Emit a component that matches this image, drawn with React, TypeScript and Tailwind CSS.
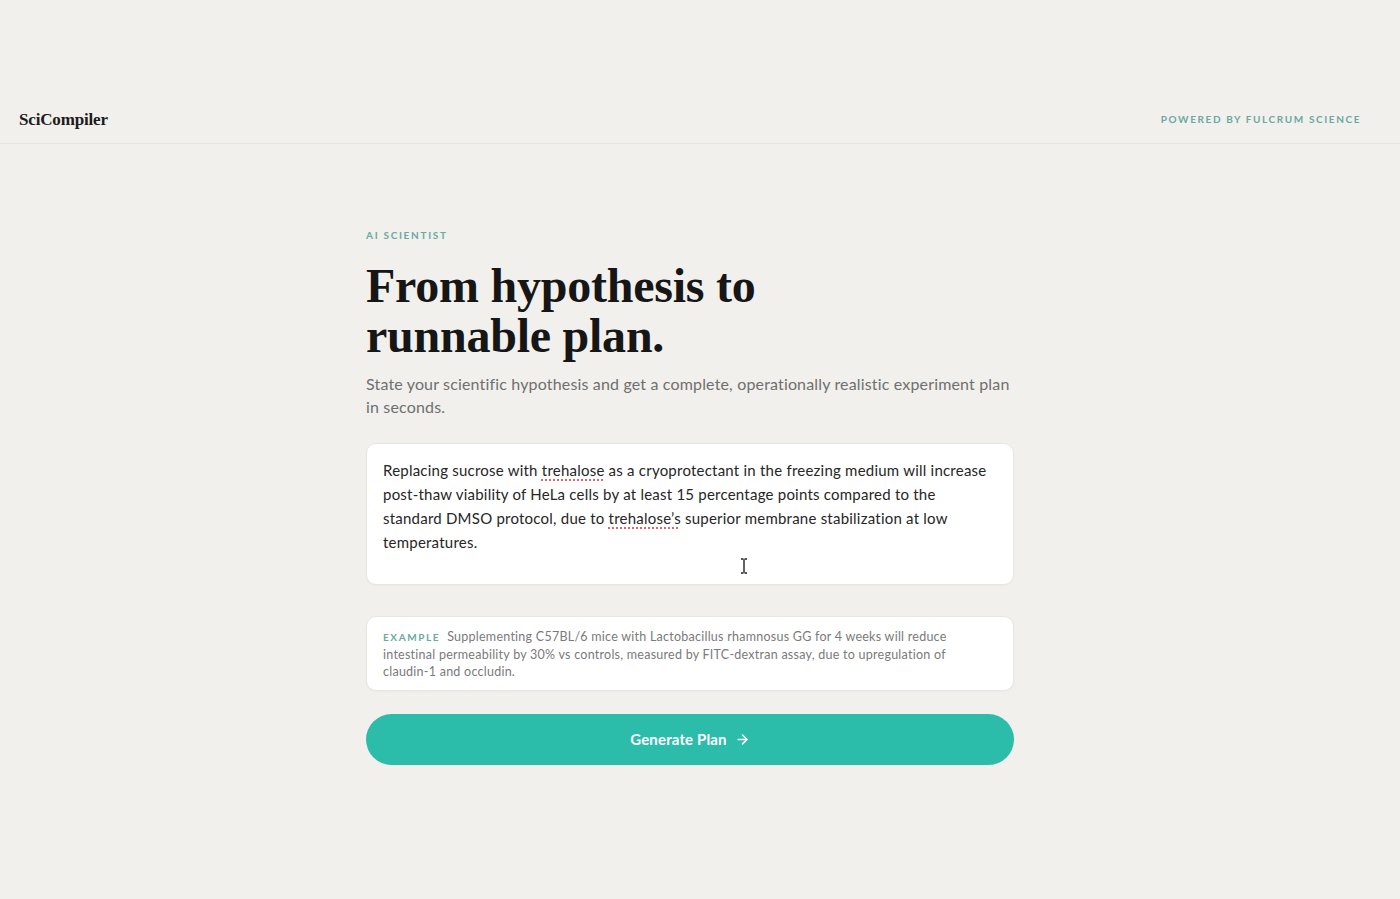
import { ArrowRight } from 'lucide-react'

const sans = "font-['Lato','Inter',sans-serif]"
const serif = "font-['Liberation_Serif','DejaVu_Serif',serif]"

function Misspelled({ children }: { children: string }) {
  return (
    <span className="underline decoration-dotted decoration-[#e06666] decoration-[1.5px] underline-offset-[3px]">
      {children}
    </span>
  )
}

function Header() {
  return (
    <header className="pt-[97px]">
      <div className="flex h-[47px] items-center justify-between border-b border-[#e6e3df] pl-[19px] pr-[39px]">
        <span className={`${serif} text-[17px] font-bold tracking-[-0.01em] text-[#1c1c1c]`}>SciCompiler</span>
        <span className={`${sans} -mt-[2px] text-[10px] font-bold tracking-[0.16em] text-[#6aa9a2]`}>
          POWERED BY FULCRUM SCIENCE
        </span>
      </div>
    </header>
  )
}

export default function App() {
  return (
    <div className={`min-h-[899px] bg-[#f1f0ed] ${sans}`}>
      <Header />

      <div className="flex justify-center pr-[20px]">
        <main className="w-[648px] pt-[84px]">
          <p className="text-[10px] font-bold tracking-[0.17em] text-[#6aa9a2]">AI SCIENTIST</p>

          <h1 className={`${serif} mt-[18px] text-[48px] font-bold leading-[50px] tracking-[-0.005em] text-[#161616]`}>
            From hypothesis to
            <br />
            runnable plan.
          </h1>

          <p className="mt-[11px] text-[16px] leading-[23px] tracking-[0.01em] text-[#6f6f6f]">
            State your scientific hypothesis and get a complete, operationally realistic experiment plan in seconds.
          </p>

          {/* hypothesis input */}
          <div className="relative mt-[25px] h-[142px] rounded-[10px] border border-[#e8e6e2] bg-white px-[16px] pt-[14px] shadow-[0_1px_2px_rgba(0,0,0,0.03)]">
            <p className="text-[15px] leading-[24px] tracking-[0.015em] text-[#262626]">
              Replacing sucrose with <Misspelled>trehalose</Misspelled> as a cryoprotectant in the freezing medium will
              increase post-thaw viability of HeLa cells by at least 15 percentage points compared to the standard DMSO
              protocol, due to <Misspelled>trehalose’s</Misspelled> superior membrane stabilization at low temperatures.
            </p>
            <svg className="absolute left-[373px] top-[114px]" width="8" height="16" viewBox="0 0 8 16">
              <path d="M1 1h2.5M4.5 1H7M4 1.5v13M1 15h2.5M4.5 15H7" stroke="#222" strokeWidth="1.4" fill="none" />
            </svg>
          </div>

          {/* example hypothesis */}
          <div className="mt-[31px] rounded-[10px] border border-[#e8e6e2] bg-white px-[16px] pt-[11px] pb-[10px] shadow-[0_1px_2px_rgba(0,0,0,0.03)]">
            <p className="text-[12.5px] leading-[17px] tracking-[0.02em] text-[#7a7a7a]">
              <span className="mr-[7px] text-[10px] font-bold tracking-[0.16em] text-[#6aa9a2]">EXAMPLE</span>
              Supplementing C57BL/6 mice with Lactobacillus rhamnosus GG for 4 weeks will reduce
              <br />
              intestinal permeability by 30% vs controls, measured by FITC-dextran assay, due to upregulation of
              <br />
              claudin-1 and occludin.
            </p>
          </div>

          <button className="mt-[23px] flex h-[51px] w-full items-center justify-center gap-[8px] rounded-full bg-[#2bbcaa] text-[15px] font-bold tracking-[0.01em] text-white">
            Generate Plan
            <ArrowRight size={15} strokeWidth={2.5} />
          </button>
        </main>
      </div>
    </div>
  )
}
